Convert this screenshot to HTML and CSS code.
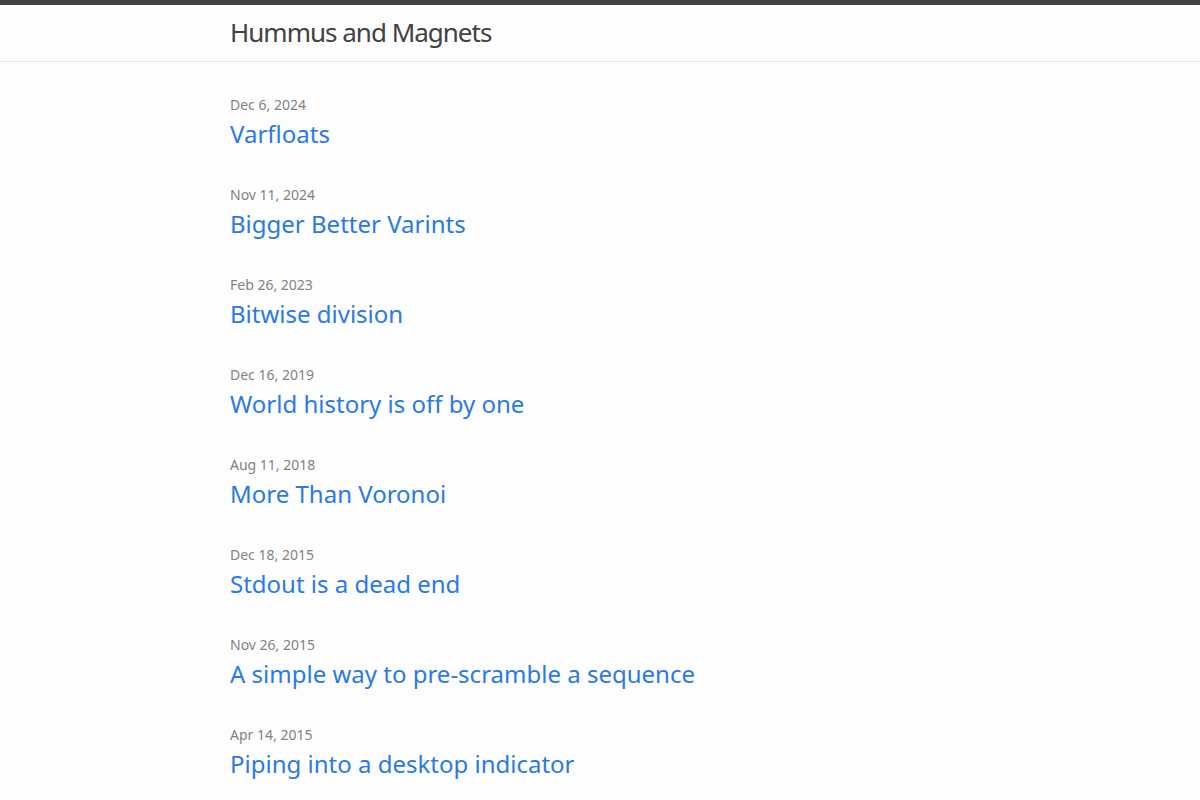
FILE: index.html
```html
<!DOCTYPE html>
<html lang="en">
<head>
    <meta charset="UTF-8">
    <meta name="viewport" content="width=device-width, initial-scale=1.0">
    <title>Hummus and Magnets</title>
    <link rel="stylesheet" href="styles.css">
</head>
<body>
    <!-- Site header -->
    <header class="site-header">
        <div class="wrapper">
            <a class="site-title" href="#">Hummus and Magnets</a>
        </div>
    </header>

    <!-- Post list -->
    <main class="page-content">
        <div class="wrapper">
            <ul class="post-list">
                <li>
                    <span class="post-meta">Dec 6, 2024</span>
                    <h2><a class="post-link" href="#">Varfloats</a></h2>
                </li>
                <li>
                    <span class="post-meta">Nov 11, 2024</span>
                    <h2><a class="post-link" href="#">Bigger Better Varints</a></h2>
                </li>
                <li>
                    <span class="post-meta">Feb 26, 2023</span>
                    <h2><a class="post-link" href="#">Bitwise division</a></h2>
                </li>
                <li>
                    <span class="post-meta">Dec 16, 2019</span>
                    <h2><a class="post-link" href="#">World history is off by one</a></h2>
                </li>
                <li>
                    <span class="post-meta">Aug 11, 2018</span>
                    <h2><a class="post-link" href="#">More Than Voronoi</a></h2>
                </li>
                <li>
                    <span class="post-meta">Dec 18, 2015</span>
                    <h2><a class="post-link" href="#">Stdout is a dead end</a></h2>
                </li>
                <li>
                    <span class="post-meta">Nov 26, 2015</span>
                    <h2><a class="post-link" href="#">A simple way to pre-scramble a sequence</a></h2>
                </li>
                <li>
                    <span class="post-meta">Apr 14, 2015</span>
                    <h2><a class="post-link" href="#">Piping into a desktop indicator</a></h2>
                </li>
            </ul>
        </div>
    </main>
</body>
</html>
```

FILE: styles.css
```css
/* Base */
body {
    margin: 0;
    font-family: "Noto Sans", "Open Sans", sans-serif;
    font-size: 16px;
    line-height: 1.5;
    color: #111;
    background-color: #fdfdfd;
}

a {
    text-decoration: none;
}

.wrapper {
    max-width: 740px;
    margin: 0 auto;
}

/* Header */
.site-header {
    border-top: 5px solid #424242;
    border-bottom: 1px solid #e8e8e8;
    min-height: 56px;
}

.site-title {
    font-size: 26px;
    font-weight: 400;
    line-height: 54px;
    letter-spacing: -1px;
    color: #424242;
}

/* Posts */
.page-content {
    padding: 32px 0 30px;
}

.post-list {
    list-style: none;
    margin: 0;
    padding: 0;
}

.post-list li {
    margin-bottom: 32px;
}

.post-meta {
    display: block;
    font-size: 14px;
    line-height: 22px;
    color: #828282;
}

.post-list h2 {
    margin: 0;
    font-size: 24px;
    font-weight: 400;
    line-height: 36px;
}

.post-link {
    color: #2a7ae2;
}
```
